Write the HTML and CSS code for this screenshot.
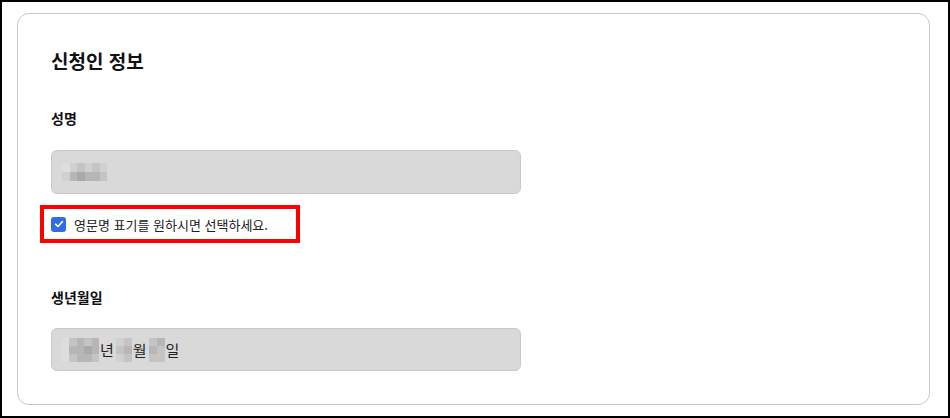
FILE: index.html
```html
<!DOCTYPE html>
<html lang="ko">
<head>
    <meta charset="UTF-8">
    <meta name="viewport" content="width=device-width, initial-scale=1.0">
    <title>신청인 정보</title>
    <link rel="stylesheet" href="styles.css">
</head>
<body>
    <div class="frame">
        <div class="card">
            <h2 class="title">신청인 정보</h2>

            <div class="label">성명</div>
            <div class="field">
                <span class="mosaic wide">
                    <i class="m0"></i><i class="m1"></i><i class="m2"></i><i class="m1"></i><i class="m2"></i><i class="m1"></i>
                    <i class="m1"></i><i class="m3"></i><i class="m4"></i><i class="m3"></i><i class="m3"></i><i class="m2"></i>
                </span>
            </div>

            <label class="check-row">
                <span class="checkbox">
                    <svg width="10" height="10" viewBox="0 0 10 10"><path d="M1.6 5.2 L4 7.5 L8.4 2.6" fill="none" stroke="#fff" stroke-width="1.6" stroke-linecap="round" stroke-linejoin="round"/></svg>
                </span>
                영문명 표기를 원하시면 선택하세요.
            </label>

            <div class="label birth">생년월일</div>
            <div class="field">
                <span class="mosaic year">
                    <i class="m0"></i><i class="m2"></i><i class="m3"></i><i class="m2"></i><i class="m3"></i>
                    <i class="m0"></i><i class="m3"></i><i class="m3"></i><i class="m4"></i><i class="m3"></i>
                    <i class="m0"></i><i class="m2"></i><i class="m3"></i><i class="m3"></i><i class="m2"></i>
                </span>년
                <span class="mosaic small">
                    <i class="m1"></i><i class="m2"></i>
                    <i class="m2"></i><i class="m3"></i>
                    <i class="m1"></i><i class="m2"></i>
                </span>월
                <span class="mosaic small">
                    <i class="m2"></i><i class="m3"></i>
                    <i class="m3"></i><i class="m2"></i>
                    <i class="m2"></i><i class="m2"></i>
                </span>일
            </div>
        </div>
    </div>
</body>
</html>
```

FILE: styles.css
```css
* {
    box-sizing: border-box;
}
body {
    margin: 0;
    font-family: "Noto Sans CJK KR", "Noto Sans", sans-serif;
    color: #111;
    background: #fff;
}
.frame {
    width: 950px;
    height: 418px;
    border: 2px solid #000;
    padding: 11px 18px 0 15px;
}
.card {
    border: 1px solid #c8c8c8;
    border-radius: 12px;
    padding: 34px 33px 32px;
    height: 392px;
}
.title {
    margin: 0;
    font-size: 19px;
    line-height: 26px;
    font-weight: 700;
}
.label {
    margin-top: 34px;
    font-size: 14px;
    line-height: 20px;
    font-weight: 700;
}
.label.birth {
    margin-top: 44px;
}
.field {
    display: flex;
    align-items: center;
    width: 470px;
    height: 44px;
    margin-top: 22px;
    padding: 0 10px;
    background: #d9d9d9;
    border: 1px solid #c9c9c9;
    border-radius: 6px;
    font-size: 15px;
    color: #222;
}
.label.birth + .field {
    margin-top: 21px;
    height: 43px;
}
.mosaic {
    display: grid;
    grid-auto-rows: 8px;
}
.mosaic i {
    display: block;
}
.mosaic.wide {
    grid-template-columns: repeat(6, 7.5px);
    grid-auto-rows: 9px;
}
.mosaic.year {
    grid-template-columns: repeat(5, 7.4px);
    margin-right: 1px;
}
.mosaic.small {
    grid-template-columns: repeat(2, 8px);
    margin: 0 1px 0 2px;
}
.m0 { background: #dedede; }
.m1 { background: #d0d0d0; }
.m2 { background: #c4c4c4; }
.m3 { background: #b6b6b6; }
.m4 { background: #a9a9a9; }
.check-row {
    display: flex;
    align-items: center;
    gap: 8px;
    width: 260px;
    height: 38px;
    margin: 11px 0 0 -11px;
    padding-left: 7px;
    border: 4px solid #f00;
    font-size: 13px;
    color: #222;
}
.checkbox {
    display: flex;
    align-items: center;
    justify-content: center;
    width: 15px;
    height: 15px;
    border-radius: 3px;
    background: #2f6de1;
}
```
